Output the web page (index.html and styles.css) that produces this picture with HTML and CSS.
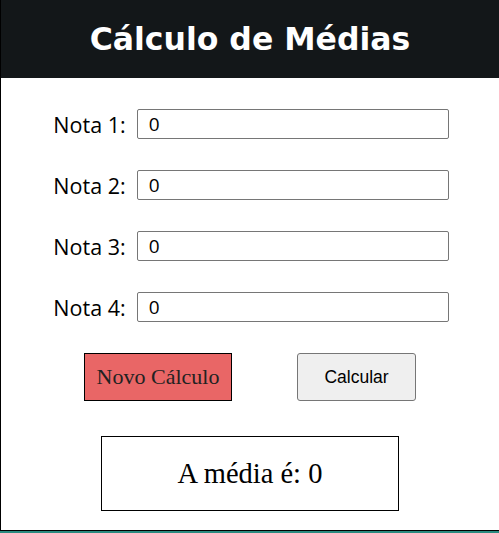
FILE: index.html
```html
<!DOCTYPE html>
<html lang="pt">
<head>
<meta charset="utf-8">
<title>Cálculo de Médias</title>
<link rel="stylesheet" href="styles.css">
</head>
<body>
<div class="app">
  <header class="topbar"><h1 class="title">Cálculo de Médias</h1></header>
  <main class="content">
    <div class="row"><label class="label" for="n1">Nota 1:</label><input class="field" id="n1" type="text" value="0"></div>
    <div class="row"><label class="label" for="n2">Nota 2:</label><input class="field" id="n2" type="text" value="0"></div>
    <div class="row"><label class="label" for="n3">Nota 3:</label><input class="field" id="n3" type="text" value="0"></div>
    <div class="row"><label class="label" for="n4">Nota 4:</label><input class="field" id="n4" type="text" value="0"></div>
    <div class="buttons">
      <button class="btn-new" type="button">Novo Cálculo</button>
      <button class="btn-calc" type="button">Calcular</button>
    </div>
    <div class="result">A média é: 0</div>
  </main>
</div>
</body>
</html>
```
FILE: styles.css
```css
html, body {
  margin: 0;
  padding: 0;
}
body {
  background: #2a8a80;
  height: 533px;
  overflow: hidden;
}
.app {
  background: #ffffff;
  border-left: 1px solid #000;
  border-bottom: 1px solid #000;
  box-sizing: border-box;
  height: 531px;
}
.topbar {
  background: #131719;
  height: 78px;
  display: flex;
  align-items: center;
  justify-content: center;
}
.title {
  margin: 0;
  color: #fff;
  font-family: "DejaVu Sans", Verdana, sans-serif;
  font-weight: bold;
  font-size: 31.5px;
}
.content {
  display: flex;
  flex-direction: column;
  align-items: center;
  padding-top: 31px;
}
.row {
  display: flex;
  align-items: center;
  height: 30px;
  margin-bottom: 31px;
  padding-left: 2px;
}
.label {
  font-family: "Open Sans", "Noto Sans", sans-serif;
  font-size: 21.5px;
  color: #000;
  margin-right: 11px;
}
.field {
  width: 312px;
  height: 30px;
  box-sizing: border-box;
  border: 1px solid #767676;
  border-radius: 2px;
  padding: 0 11px;
  font-family: "Open Sans", "Noto Sans", sans-serif;
  font-size: 19px;
  color: #000;
  background: #fff;
}
.buttons {
  display: flex;
  gap: 65px;
  margin-bottom: 35px;
}
.btn-new {
  width: 148px;
  height: 48px;
  background: #e96666;
  border: 1px solid #000;
  font-family: "Liberation Serif", "Times New Roman", serif;
  font-size: 22px;
  color: #222;
  padding: 0;
}
.btn-calc {
  width: 119px;
  height: 48px;
  background: #efefef;
  border: 1px solid #767676;
  border-radius: 3px;
  font-family: "Liberation Sans", Arial, sans-serif;
  font-size: 17.5px;
  color: #000;
  padding: 0;
}
.result {
  width: 298px;
  height: 75px;
  box-sizing: border-box;
  border: 1px solid #000;
  display: flex;
  align-items: center;
  justify-content: center;
  font-family: "Liberation Serif", "Times New Roman", serif;
  font-size: 28.5px;
  color: #000;
}
```
